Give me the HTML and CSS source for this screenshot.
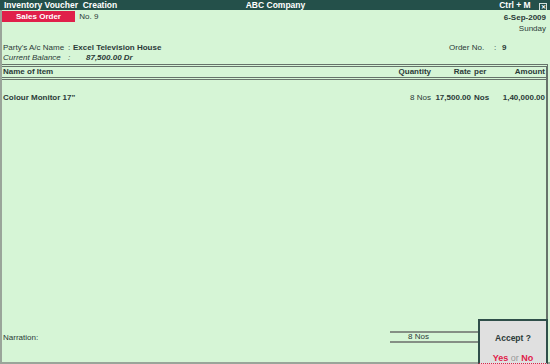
FILE: index.html
```html
<!DOCTYPE html>
<html lang="en">
<head>
  <meta charset="UTF-8" />
  <title>Inventory Voucher Creation</title>
  <link rel="stylesheet" href="styles.css">
</head>
<body>
  <div class="screen">
    <div class="titlebar">
      <span class="tb-left">Inventory Voucher&nbsp; Creation</span>
      <span class="tb-mid">ABC Company</span>
      <span class="tb-right">Ctrl + M <span class="close">&#x2715;</span></span>
    </div>

    <div class="main">
      <div class="voucher-head">
        <div class="vh-left">
          <span class="vtype">Sales Order</span>
          <span class="vno">No. 9</span>
        </div>
        <div class="vh-right">
          <div class="date">6-Sep-2009</div>
          <div class="day">Sunday</div>
        </div>
      </div>

      <div class="party">
        <div class="party-row">
          <span class="lbl">Party's A/c Name</span>
          <span class="colon">:</span>
          <span class="val">Excel Television House</span>
          <span class="order-lbl">Order No.</span>
          <span class="order-colon">:</span>
          <span class="order-val">9</span>
        </div>
        <div class="party-row italic">
          <span class="lbl">Current Balance</span>
          <span class="colon">:</span>
          <span class="bal">87,500.00 Dr</span>
        </div>
      </div>

      <div class="items">
        <div class="cols head">
          <span class="c-name">Name of Item</span>
          <span class="c-qty">Quantity</span>
          <span class="c-rate">Rate</span>
          <span class="c-per">per</span>
          <span class="c-amt">Amount</span>
        </div>
        <div class="cols row">
          <span class="c-name">Colour Monitor 17"</span>
          <span class="c-qty">8 Nos</span>
          <span class="c-rate">17,500.00</span>
          <span class="c-per">Nos</span>
          <span class="c-amt">1,40,000.00</span>
        </div>
      </div>

      <div class="footer">
        <span class="narr">Narration:</span>
        <span class="total">8 Nos</span>
      </div>
    </div>

    <div class="accept">
      <div class="q">Accept ?</div>
      <div class="yn"><span class="y">Yes</span> <span class="or">or</span> <span class="y">No</span></div>
    </div>
  </div>
</body>
</html>
```

FILE: styles.css
```css
* {
  margin: 0;
  padding: 0;
  box-sizing: border-box;
}

body {
  background: #d6f5d6;
  font-family: "Liberation Sans", Arial, sans-serif;
  font-size: 8px;
  color: #2b3a38;
  white-space: nowrap;
}

.screen {
  position: relative;
  width: 550px;
  height: 364px;
  display: flex;
  flex-direction: column;
  overflow: hidden;
}

.titlebar {
  height: 10px;
  background-color: #24504a;
  background-image: radial-gradient(circle, #4f7d74 0.6px, transparent 0.7px);
  background-size: 2px 2px;
  color: #fff;
  font-weight: bold;
  font-size: 8.5px;
  line-height: 10px;
  display: grid;
  grid-template-columns: 1fr auto 1fr;
  padding: 0 2px 0 3px;
  overflow: hidden;
}

.tb-left, .tb-mid, .tb-right {
  background: #24504a;
  padding: 0 1px;
  height: 10px;
}

.tb-left {
  justify-self: start;
}

.tb-right {
  justify-self: end;
}

.close {
  display: inline-block;
  width: 8px;
  height: 8px;
  margin-left: 6px;
  border: 1px solid #cfe0dc;
  font-size: 6px;
  line-height: 6px;
  text-align: center;
  vertical-align: -1px;
}

.main {
  flex: 1;
  display: flex;
  flex-direction: column;
  border-left: 2px solid #9aa59a;
  border-bottom: 2px solid #9aa59a;
}

.voucher-head {
  display: flex;
  justify-content: space-between;
  padding: 1px 4px 0 0;
}

.vtype {
  display: inline-block;
  width: 73px;
  height: 11px;
  line-height: 11px;
  background: #e0204a;
  color: #fff;
  font-weight: bold;
  text-align: center;
}

.vno {
  margin-left: 2px;
}

.vh-right {
  text-align: right;
  line-height: 11px;
  padding-top: 1px;
}

.date {
  font-weight: bold;
}

.party {
  margin-top: 9px;
  padding-left: 1px;
}

.party-row {
  display: flex;
  line-height: 10px;
}

.party-row .lbl {
  width: 65px;
}

.party-row .colon {
  width: 5px;
}

.party-row .val {
  font-weight: bold;
}

.order-lbl {
  margin-left: auto;
  width: 45px;
}

.order-colon {
  width: 8px;
}

.order-val {
  width: 48px;
  font-weight: bold;
}

.italic {
  font-style: italic;
}

.bal {
  font-weight: bold;
  margin-left: 13px;
}

.items {
  flex: 1;
  margin-top: 1px;
  border-top: 3px double #66736a;
  border-right: 2px solid #66736a;
  margin-right: 2px;
}

.cols {
  display: flex;
  padding: 0 1px;
  line-height: 10px;
}

.cols.head {
  font-weight: bold;
  line-height: 10px;
  border-bottom: 3px double #66736a;
}

.cols.row {
  margin-top: 13px;
}

.row .c-name, .row .c-rate, .row .c-per, .row .c-amt {
  font-weight: bold;
}

.c-name {
  flex: 1;
}

.c-qty {
  width: 60px;
  text-align: right;
}

.c-rate {
  width: 40px;
  text-align: right;
}

.c-per {
  width: 30px;
  padding-left: 3px;
}

.c-amt {
  width: 44px;
  text-align: right;
}

.footer {
  height: 42px;
  position: relative;
  padding-top: 13px;
  line-height: 10px;
}

.narr {
  padding-left: 1px;
}

.total {
  position: absolute;
  left: 388px;
  top: 11px;
  width: 90px;
  height: 12px;
  line-height: 8px;
  padding-left: 18px;
  border-top: 2px solid #858f85;
  border-bottom: 2px solid #858f85;
}

.accept {
  position: absolute;
  right: 2px;
  bottom: 0;
  width: 70px;
  height: 45px;
  background: #e0e0e0;
  border: 2px solid #2f4f4a;
  border-bottom: 1px dotted #e0204a;
  text-align: center;
  line-height: 10px;
}

.q {
  font-weight: bold;
  font-size: 8.5px;
  margin-top: 12px;
}

.yn {
  margin-top: 10px;
  font-weight: bold;
  font-size: 9px;
  color: #e0204a;
}

.or {
  color: #999;
  font-weight: normal;
}
```
